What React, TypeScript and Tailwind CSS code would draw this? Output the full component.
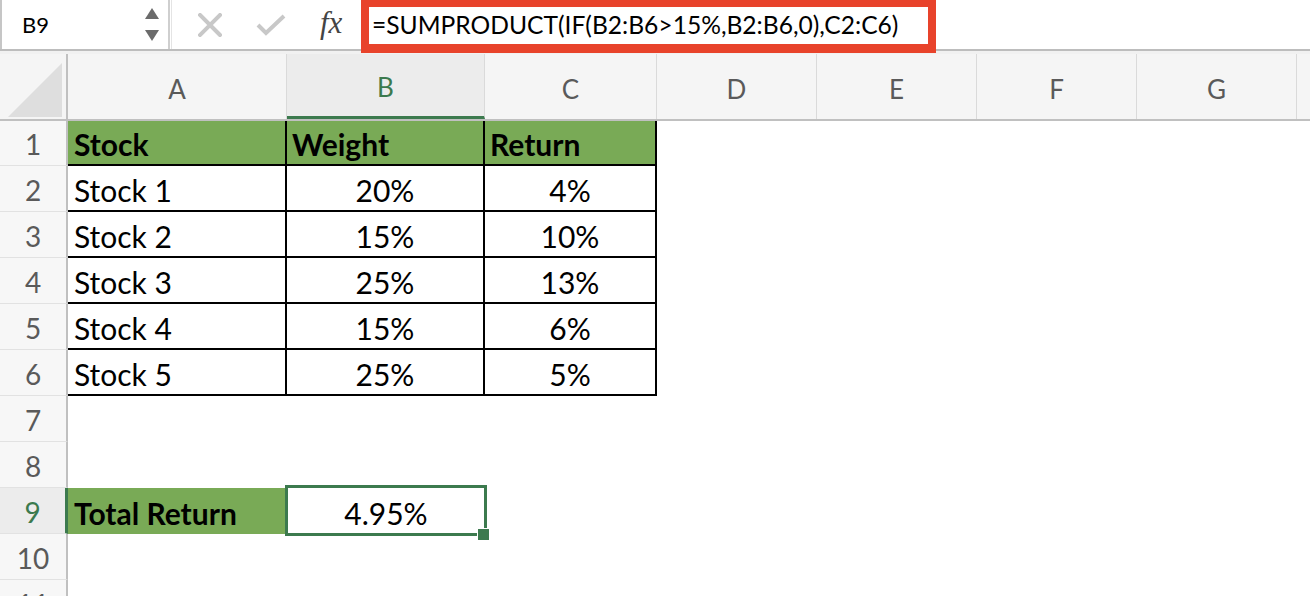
import React from 'react';

const GREEN_FILL = 'bg-[#79aa56]';

const cols = ['A', 'B', 'C', 'D', 'E', 'F', 'G', ''];
const colWidths = ['w-[219px]', 'w-[198px]', 'w-[172px]', 'w-[160px]', 'w-[160px]', 'w-[160px]', 'w-[160px]', 'w-[160px]'];

const stocks = [
  { name: 'Stock 1', weight: '20%', ret: '4%' },
  { name: 'Stock 2', weight: '15%', ret: '10%' },
  { name: 'Stock 3', weight: '25%', ret: '13%' },
  { name: 'Stock 4', weight: '15%', ret: '6%' },
  { name: 'Stock 5', weight: '25%', ret: '5%' },
];

function RowHeader({ n, selected }: { n: number; selected?: boolean }) {
  return (
    <div
      className={
        'w-[68px] shrink-0 flex items-center justify-center pt-[2px] border-b border-[#e2e2e2] text-[28px] leading-none ' +
        (selected
          ? 'bg-[#ececec] text-[#3c7a4e] border-r-[3px] border-r-[#3c7a4e]'
          : 'bg-[#f7f7f7] text-[#5a5a5a] border-r-2 border-r-[#c0c0c0]')
      }
    >
      {n}
    </div>
  );
}

function EmptyCells({ from }: { from: number }) {
  return (
    <>
      {colWidths.slice(from).map((w, i) => (
        <div key={i} className={w + ' shrink-0'} />
      ))}
    </>
  );
}

export default function App() {
  return (
    <div
      className="w-[1310px] h-[596px] overflow-hidden bg-white text-black"
      style={{ fontFamily: 'Lato, "Open Sans", sans-serif' }}
    >
      {/* formula bar */}
      <div className="relative h-[51px] flex border-b-2 border-[#bdbdbd]">
        <div className="w-[168px] shrink-0 flex items-center justify-between border-l-2 border-[#c6c6c6] pl-5 pr-2">
          <span className="text-[22px] leading-none">B9</span>
          <svg width="16" height="36" viewBox="0 0 16 36">
            <path d="M8 1 L15 12 L1 12 Z" fill="#6b6b6b" />
            <path d="M1 23 L15 23 L8 34 Z" fill="#6b6b6b" />
          </svg>
        </div>
        <div className="w-[4px] shrink-0 border-l-2 border-r border-[#cfcfcf] border-r-[#e4e4e4]" />
        <div className="flex items-center pl-[26px] gap-[34px]">
          <svg width="24" height="24" viewBox="0 0 24 24">
            <path d="M2 2 L22 22 M22 2 L2 22" stroke="#c8c8c8" strokeWidth="4" strokeLinecap="square" />
          </svg>
          <svg width="30" height="22" viewBox="0 0 30 22">
            <path d="M2 11 L10 19 L28 2" stroke="#c8c8c8" strokeWidth="4" fill="none" />
          </svg>
          <span
            className="italic text-[31px] leading-none text-[#444] -mt-[4px]"
            style={{ fontFamily: '"Liberation Serif", serif' }}
          >
            fx
          </span>
        </div>
        <div className="absolute left-[361px] top-0 w-[575px] h-[53px] border-[8px] border-t-[7px] border-b-[9px] border-[#e8432b] bg-white flex items-center pl-[3px]">
          <span className="text-[24.6px] leading-none">=SUMPRODUCT(IF(B2:B6&gt;15%,B2:B6,0),C2:C6)</span>
        </div>
      </div>
      <div className="h-[3px] bg-[#f1f1f1]" />

      {/* column headers */}
      <div className="flex h-[67px] border-b-2 border-[#c0c0c0] overflow-hidden">
        <div className="w-[68px] shrink-0 bg-[#f5f5f5] border-r-2 border-[#c0c0c0] flex items-end justify-end p-[4px] pb-[2px]">
          <svg width="54" height="54" viewBox="0 0 54 54">
            <path d="M54 0 L54 54 L0 54 Z" fill="#dedede" />
          </svg>
        </div>
        {cols.map((c, i) => (
          <div
            key={i}
            className={
              colWidths[i] +
              ' shrink-0 flex items-center justify-center pt-[4px] text-[26px] leading-none border-r border-[#dadada] ' +
              (c === 'B'
                ? 'bg-[#ececec] text-[#3c7a4e] border-b-[3px] border-b-[#3c7a4e]'
                : 'bg-[#f5f5f5] text-[#5a5a5a]')
            }
          >
            {c}
          </div>
        ))}
      </div>

      {/* row 1 */}
      <div className="flex h-[45px] overflow-hidden">
        <RowHeader n={1} />
        <div className={'w-[219px] shrink-0 ' + GREEN_FILL + ' border-r-2 border-b-2 border-black flex items-center pt-[3px] pl-[6px] text-[30px] font-bold leading-none'}>
          Stock
        </div>
        <div className={'w-[198px] shrink-0 ' + GREEN_FILL + ' border-r-2 border-b-2 border-black flex items-center pt-[3px] pl-[5px] text-[30px] font-bold leading-none'}>
          Weight
        </div>
        <div className={'w-[172px] shrink-0 ' + GREEN_FILL + ' border-r-2 border-b-2 border-black flex items-center pt-[3px] pl-[5px] text-[30px] font-bold leading-none'}>
          Return
        </div>
        <EmptyCells from={3} />
      </div>

      {/* rows 2-6 */}
      {stocks.map((s, i) => (
        <div key={s.name} className="flex h-[46px] overflow-hidden">
          <RowHeader n={i + 2} />
          <div className="w-[219px] shrink-0 border-r-2 border-b-2 border-black flex items-center pt-[3px] pl-[6px] text-[30px] leading-none">
            {s.name}
          </div>
          <div className="w-[198px] shrink-0 border-r-2 border-b-2 border-black flex items-center justify-center pt-[3px] text-[30px] leading-none">
            {s.weight}
          </div>
          <div className="w-[172px] shrink-0 border-r-2 border-b-2 border-black flex items-center justify-center pt-[3px] text-[30px] leading-none">
            {s.ret}
          </div>
          <EmptyCells from={3} />
        </div>
      ))}

      {/* rows 7-8 */}
      {[7, 8].map((n) => (
        <div key={n} className="flex h-[46px] overflow-hidden">
          <RowHeader n={n} />
          <EmptyCells from={0} />
        </div>
      ))}

      {/* row 9 */}
      <div className="flex h-[46px]">
        <RowHeader n={9} selected />
        <div className={'w-[219px] shrink-0 ' + GREEN_FILL + ' flex items-center pt-[3px] pl-[6px] text-[30px] font-bold leading-none'}>
          Total Return
        </div>
        <div className="relative w-[198px] shrink-0 flex items-center justify-center pt-[3px] text-[30px] leading-none">
          4.95%
          <div className="absolute -left-[2px] -top-[3px] -right-[2px] -bottom-[2px] border-[3px] border-[#3c7a4e]" />
          <div className="absolute -right-[5px] -bottom-[7px] w-[13px] h-[13px] bg-white p-[1px]">
            <div className="w-full h-full bg-[#3c7a4e]" />
          </div>
        </div>
      </div>

      {/* rows 10-11 */}
      {[10, 11].map((n) => (
        <div key={n} className="flex h-[46px] overflow-hidden">
          <RowHeader n={n} />
          <EmptyCells from={0} />
        </div>
      ))}
    </div>
  );
}
